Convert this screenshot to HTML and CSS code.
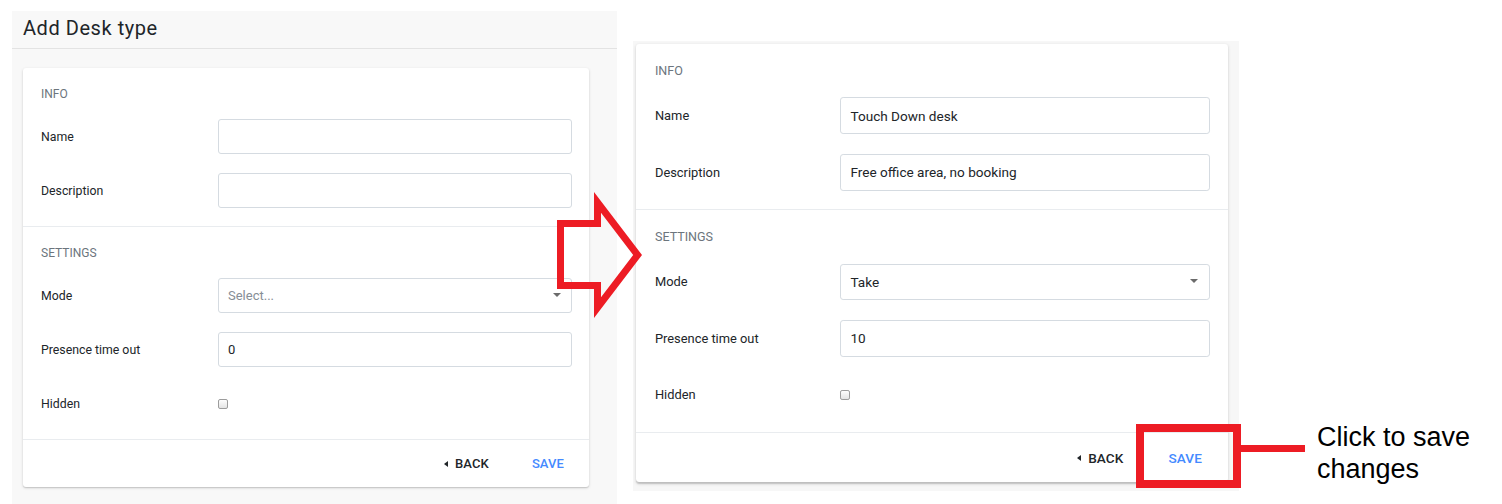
FILE: index.html
```html
<!DOCTYPE html>
<html lang="en">
<head>
<meta charset="utf-8">
<title>Add Desk type</title>
<link rel="stylesheet" href="styles.css">
</head>
<body>
<main class="board">
  <section class="shot shot--before">
    <header class="page-head"><h1 class="page-title">Add Desk type</h1></header>
    <div class="card">
      <div class="card-section">
        <div class="section-title">INFO</div>
        <div class="field-grid">
          <label class="field-label">Name</label>
          <input class="control" type="text" value="">
          <label class="field-label">Description</label>
          <input class="control" type="text" value="">
        </div>
      </div>
      <div class="card-section">
        <div class="section-title">SETTINGS</div>
        <div class="field-grid">
          <label class="field-label">Mode</label>
          <div class="control select"><span class="placeholder">Select...</span><span class="select-caret"></span></div>
          <label class="field-label">Presence time out</label>
          <input class="control" type="text" value="0">
          <label class="field-label">Hidden</label>
          <div class="check-cell"><span class="checkbox"></span></div>
        </div>
      </div>
      <div class="card-footer">
        <button class="btn btn--back"><span class="back-caret"></span>BACK</button>
        <button class="btn btn--save">SAVE</button>
      </div>
    </div>
  </section>

  <section class="shot shot--after">
    <div class="card">
      <div class="card-section">
        <div class="section-title">INFO</div>
        <div class="field-grid">
          <label class="field-label">Name</label>
          <input class="control" type="text" value="Touch Down desk">
          <label class="field-label">Description</label>
          <input class="control" type="text" value="Free office area, no booking">
        </div>
      </div>
      <div class="card-section">
        <div class="section-title">SETTINGS</div>
        <div class="field-grid">
          <label class="field-label">Mode</label>
          <div class="control select"><span class="value">Take</span><span class="select-caret"></span></div>
          <label class="field-label">Presence time out</label>
          <input class="control" type="text" value="10">
          <label class="field-label">Hidden</label>
          <div class="check-cell"><span class="checkbox"></span></div>
        </div>
      </div>
      <div class="card-footer">
        <button class="btn btn--back"><span class="back-caret"></span>BACK</button>
        <button class="btn btn--save">SAVE</button>
      </div>
    </div>
  </section>
</main>

<svg class="flow-arrow" width="1502" height="504" viewBox="0 0 1502 504" aria-hidden="true">
  <path fill="#ed1c24" fill-rule="evenodd"
    d="M557 220 L594 220 L594 192 L642 255 L594 318 L594 289 L557 289 Z
       M564 227 L601 227 L601 212.7 L633.2 255 L601 297.3 L601 282 L564 282 Z"/>
</svg>
<div class="callout-box"></div>
<div class="callout-line"></div>
<p class="callout-text">Click to save<br>changes</p>
</body>
</html>
```

FILE: styles.css
```css
html, body {
  margin: 0;
  padding: 0;
  background: #ffffff;
}

body {
  width: 1502px;
  height: 504px;
  overflow: hidden;
  position: relative;
  font-family: Roboto, "Liberation Sans", Arial, sans-serif;
  color: #212529;
}

.board {
  display: flex;
  align-items: flex-start;
  padding: 11px 0 0 12px;
}

.shot {
  background: #f8f8f8;
  box-sizing: border-box;
}

.shot--before {
  width: 605px;
  height: 493px;
}

.shot--after {
  width: 606px;
  height: 450px;
  margin-left: 16px;
  margin-top: 30px;
  background: #f7f7f7;
}

.page-head {
  height: 38px;
  box-sizing: border-box;
  border-bottom: 1px solid #e3e3e3;
  padding: 0 0 4px 11px;
  display: flex;
  align-items: center;
}

.page-title {
  margin: 0;
  font-size: 20px;
  font-weight: 400;
  letter-spacing: 0.55px;
  color: #212529;
  line-height: 24px;
}

.card {
  width: 566px;
  background: #ffffff;
  border-radius: 3px;
  box-shadow: 0 1px 3px rgba(0, 0, 0, 0.16), 0 1px 1px rgba(0, 0, 0, 0.10);
}

.shot--before .card {
  margin: 19px 0 0 11px;
}

.shot--after .card {
  zoom: 1.046;
  margin: 3px 0 0 3px;
}

.card-section {
  padding: 18px 17.5px 18px 18px;
  border-bottom: 1px solid #e9ecef;
}

.section-title {
  font-size: 12px;
  line-height: 16px;
  color: #6c757d;
  margin-bottom: 17px;
}

.field-grid {
  display: grid;
  grid-template-columns: 176.5px 1fr;
  row-gap: 19px;
  align-items: center;
}

.field-label {
  font-size: 12.3px;
  color: #212529;
}

.control {
  height: 35px;
  box-sizing: border-box;
  width: 100%;
  border: 1px solid #d5dbe1;
  border-radius: 3px;
  padding: 0 9.5px;
  font-family: Roboto, "Liberation Sans", Arial, sans-serif;
  font-size: 13px;
  color: #212529;
  background: #ffffff;
  margin: 0;
  outline: none;
}

.select {
  display: flex;
  align-items: center;
  justify-content: space-between;
  padding-right: 10px;
}

.placeholder {
  color: #868e96;
}

.select-caret {
  width: 0;
  height: 0;
  border-left: 4px solid transparent;
  border-right: 4px solid transparent;
  border-top: 4px solid #6b6b6b;
  margin-top: -2px;
}

.check-cell {
  height: 35px;
  display: flex;
  align-items: center;
}

.checkbox {
  width: 10px;
  height: 10px;
  box-sizing: border-box;
  border: 1px solid #9c9c9c;
  border-radius: 2px;
  background: linear-gradient(#fdfdfd, #e4e4e4);
}

.card-footer {
  height: 47px;
  display: flex;
  align-items: center;
  justify-content: flex-end;
  gap: 43px;
  padding-right: 25px;
}

.btn {
  border: 0;
  background: none;
  padding: 0;
  margin: 0;
  font-family: Roboto, "Liberation Sans", Arial, sans-serif;
  font-size: 13px;
  font-weight: 500;
  letter-spacing: 0.1px;
  display: flex;
  align-items: center;
  cursor: pointer;
}

.btn--back {
  color: #212529;
}

.btn--save {
  color: #448aff;
}

.back-caret {
  width: 0;
  height: 0;
  border-top: 3.5px solid transparent;
  border-bottom: 3.5px solid transparent;
  border-right: 4px solid #212529;
  margin-right: 7px;
}

.flow-arrow {
  position: absolute;
  left: 0;
  top: 0;
  pointer-events: none;
}

.callout-box {
  position: absolute;
  left: 1136px;
  top: 424px;
  width: 105px;
  height: 64px;
  box-sizing: border-box;
  border: 8px solid #ed1c24;
}

.callout-line {
  position: absolute;
  left: 1241px;
  top: 445px;
  width: 64px;
  height: 7px;
  background: #ed1c24;
}

.callout-text {
  position: absolute;
  left: 1317px;
  top: 421px;
  margin: 0;
  font-family: "Liberation Sans", Arial, sans-serif;
  font-size: 27px;
  line-height: 32px;
  color: #000000;
}
```
